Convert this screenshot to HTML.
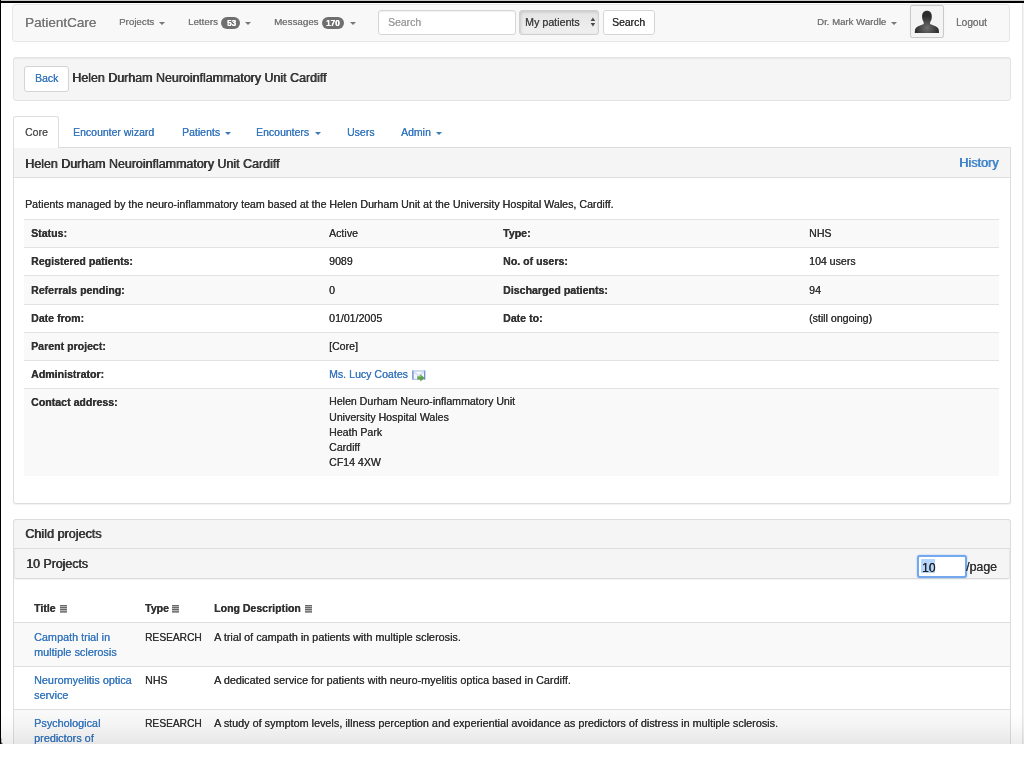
<!DOCTYPE html>
<html><head><meta charset="utf-8"><title>PatientCare</title>
<style>
html,body{margin:0;padding:0;background:#fff;width:1024px;height:768px;overflow:hidden;}
body{position:relative;font-family:"Liberation Sans",sans-serif;}
body>div,body>svg{position:absolute;}
.t{white-space:pre;line-height:normal;will-change:transform;}
</style></head><body>
<div style="left:0px;top:0px;width:1024.00px;height:1.00px;background:#c9c9c9"></div>
<div style="left:0px;top:1.0px;width:1024.00px;height:1.70px;background:#000"></div>
<div style="left:0px;top:0px;width:1.25px;height:744.00px;background:#000"></div>
<div style="left:1021.5px;top:2.7px;width:2.50px;height:741.30px;background:#f3f3f3;border-left:1px solid #e6e6e6;box-sizing:border-box"></div>
<div style="left:12.3px;top:4.3px;width:998.20px;height:37.70px;background:#f8f8f8;border:1px solid #e7e7e7;border-radius:3px;box-sizing:border-box"></div>
<div class="t" style="left:24.6px;top:14.68px;font-size:13.5px;color:#777;text-shadow:0.25px 0 0 #777;">PatientCare</div>
<div class="t" style="left:119.1px;top:16.13px;font-size:9.75px;color:#777;text-shadow:0.25px 0 0 #777;">Projects</div>
<div style="left:159.3px;top:21.6px;width:0;height:0;border-left:3.00px solid transparent;border-right:3.00px solid transparent;border-top:3.20px solid #777;"></div>
<div class="t" style="left:188.3px;top:16.13px;font-size:9.75px;color:#777;text-shadow:0.25px 0 0 #777;">Letters</div>
<div style="left:221.1px;top:16.9px;width:18.90px;height:11.90px;background:#6f6f6f;border-radius:6px"></div>
<div class="t" style="left:226.6px;top:19.06px;font-size:8.2px;color:#fff;font-weight:bold;text-shadow:0.3px 0 0 #fff;">53</div>
<div style="left:245.4px;top:21.5px;width:0;height:0;border-left:3.00px solid transparent;border-right:3.00px solid transparent;border-top:3.20px solid #777;"></div>
<div class="t" style="left:273.8px;top:16.13px;font-size:9.75px;color:#777;text-shadow:0.25px 0 0 #777;">Messages</div>
<div style="left:321.5px;top:17.0px;width:22.70px;height:11.80px;background:#6f6f6f;border-radius:6px"></div>
<div class="t" style="left:326.3px;top:19.06px;font-size:8.2px;color:#fff;font-weight:bold;text-shadow:0.3px 0 0 #fff;">170</div>
<div style="left:349.7px;top:21.5px;width:0;height:0;border-left:3.00px solid transparent;border-right:3.00px solid transparent;border-top:3.20px solid #777;"></div>
<div style="left:378.1px;top:9.5px;width:137.50px;height:25.30px;background:#fff;border:1px solid #d6d6d6;border-radius:3px;box-sizing:border-box;box-shadow:inset 0 1px 1px rgba(0,0,0,.06)"></div>
<div class="t" style="left:387.7px;top:17.09px;font-size:10.45px;color:#a0a0a0;text-shadow:0.25px 0 0 #a0a0a0;">Search</div>
<div style="left:518.6px;top:9.5px;width:80.80px;height:25.00px;background:linear-gradient(#e4e4e4,#f0f0f0);border:1px solid #d0d0d0;border-radius:3px;box-sizing:border-box;box-shadow:inset 1px 1px 3px rgba(0,0,0,.14)"></div>
<div class="t" style="left:525.3px;top:15.76px;font-size:10.7px;color:#444;text-shadow:0.25px 0 0 #444;">My patients</div>
<svg style="position:absolute;left:589.5px;top:17px" width="6" height="10" viewBox="0 0 6 10"><path d="M0.6 4.1 L2.9 0.6 L5.2 4.1 Z M0.6 5.9 L2.9 9.5 L5.2 5.9 Z" fill="#4a4a4a"/></svg>
<div style="left:602.5px;top:9.5px;width:52.00px;height:25.00px;background:#fff;border:1px solid #d6d6d6;border-radius:3px;box-sizing:border-box"></div>
<div class="t" style="left:612.3px;top:16.89px;font-size:10.45px;color:#333;text-shadow:0.25px 0 0 #333;">Search</div>
<div class="t" style="left:816.6px;top:16.33px;font-size:9.64px;color:#777;text-shadow:0.25px 0 0 #777;">Dr. Mark Wardle</div>
<div style="left:891.2px;top:21.5px;width:0;height:0;border-left:3.00px solid transparent;border-right:3.00px solid transparent;border-top:3.20px solid #777;"></div>
<div style="left:910.2px;top:4.5px;width:33.70px;height:33.40px;background:#f4f4f4;border:1px solid #c9c9c9;border-radius:2.5px;box-sizing:border-box;box-shadow:0 0 1px rgba(0,0,0,.1)"></div>
<svg style="position:absolute;left:912px;top:7px" width="30" height="29" viewBox="0 0 30 29">
<defs><radialGradient id="av" cx="15" cy="21" r="12" gradientUnits="userSpaceOnUse"><stop offset="0" stop-color="#6e6e6e"/><stop offset="1" stop-color="#2c2c2c"/></radialGradient></defs>
<path d="M15 3.7 C12 3.7 10.1 5.8 10.1 9.2 C10.1 11.5 10.6 13.5 11.6 14.8 L11.8 17.0 C9.5 18.2 6.5 19 4.6 20.2 C3.2 21.2 2.8 22.8 2.8 26 L27 26 C27 22.8 26.6 21.2 25.2 20.2 C23.3 19 20.3 18.2 18 17.0 L18.3 14.8 C19.3 13.5 19.8 11.5 19.8 9.2 C19.8 5.8 18 3.7 15 3.7 Z" fill="url(#av)"/>
</svg>
<div class="t" style="left:956.3px;top:16.74px;font-size:10.07px;color:#777;text-shadow:0.25px 0 0 #777;">Logout</div>
<div style="left:12.5px;top:57.3px;width:998.00px;height:43.70px;background:#f5f5f5;border:1px solid #e3e3e3;border-radius:3px;box-sizing:border-box;box-shadow:inset 0 1px 1px rgba(0,0,0,.05)"></div>
<div style="left:24.4px;top:65.8px;width:44.20px;height:25.80px;background:#fff;border:1px solid #d4d4d4;border-radius:3px;box-sizing:border-box"></div>
<div class="t" style="left:34.8px;top:72.96px;font-size:10.48px;color:#3878be;text-shadow:0.25px 0 0 #3878be;">Back</div>
<div class="t" style="left:72.2px;top:70.75px;font-size:12.45px;color:#333;text-shadow:0.7px 0 0 #333;">Helen Durham Neuroinflammatory Unit Cardiff</div>
<div style="left:12.5px;top:147.1px;width:998.50px;height:1.00px;background:#ddd"></div>
<div style="left:12.8px;top:116.2px;width:46.40px;height:31.90px;background:#fff;border:1px solid #ddd;border-bottom:none;border-radius:3px 3px 0 0;box-sizing:border-box"></div>
<div class="t" style="left:24.5px;top:125.94px;font-size:10.5px;color:#555;text-shadow:0.25px 0 0 #555;">Core</div>
<div class="t" style="left:73.3px;top:125.94px;font-size:10.5px;color:#3878be;text-shadow:0.25px 0 0 #3878be;">Encounter wizard</div>
<div class="t" style="left:181.8px;top:125.94px;font-size:10.5px;color:#3878be;text-shadow:0.25px 0 0 #3878be;">Patients</div>
<div style="left:225.0px;top:132.0px;width:0;height:0;border-left:3.00px solid transparent;border-right:3.00px solid transparent;border-top:3.20px solid #3878be;"></div>
<div class="t" style="left:256.4px;top:125.94px;font-size:10.5px;color:#3878be;text-shadow:0.25px 0 0 #3878be;">Encounters</div>
<div style="left:315.3px;top:132.0px;width:0;height:0;border-left:3.00px solid transparent;border-right:3.00px solid transparent;border-top:3.20px solid #3878be;"></div>
<div class="t" style="left:347.1px;top:125.94px;font-size:10.5px;color:#3878be;text-shadow:0.25px 0 0 #3878be;">Users</div>
<div class="t" style="left:400.5px;top:125.94px;font-size:10.5px;color:#3878be;text-shadow:0.25px 0 0 #3878be;">Admin</div>
<div style="left:435.6px;top:132.0px;width:0;height:0;border-left:3.00px solid transparent;border-right:3.00px solid transparent;border-top:3.20px solid #3878be;"></div>
<div style="left:12.5px;top:148.1px;width:998.00px;height:355.50px;background:#fff;border:1px solid #ddd;border-top:none;border-radius:0 0 3px 3px;box-sizing:border-box;box-shadow:0 1px 1px rgba(0,0,0,.05)"></div>
<div style="left:12.5px;top:148.1px;width:998.00px;height:29.70px;background:#f5f5f5;border:1px solid #ddd;border-top:none;box-sizing:border-box"></div>
<div class="t" style="left:24.7px;top:156.55px;font-size:12.45px;color:#333;text-shadow:0.7px 0 0 #333;">Helen Durham Neuroinflammatory Unit Cardiff</div>
<div class="t" style="left:959.1px;top:156.36px;font-size:12.65px;color:#4285c9;text-shadow:0.7px 0 0 #4285c9;">History</div>
<div class="t" style="left:24.7px;top:198.07px;font-size:10.68px;color:#333;text-shadow:0.25px 0 0 #333;">Patients managed by the neuro-inflammatory team based at the Helen Durham Unit at the University Hospital Wales, Cardiff.</div>
<div style="left:24.4px;top:219.0px;width:974.60px;height:28.20px;background:#f9f9f9;border-top:1px solid #e2e2e2;box-sizing:border-box"></div>
<div class="t" style="left:30.8px;top:227.15px;font-size:10.6px;color:#333;font-weight:bold;text-shadow:0.3px 0 0 #333;">Status:</div>
<div class="t" style="left:328.9px;top:227.15px;font-size:10.6px;color:#333;text-shadow:0.25px 0 0 #333;">Active</div>
<div class="t" style="left:503.1px;top:227.15px;font-size:10.6px;color:#333;font-weight:bold;text-shadow:0.3px 0 0 #333;">Type:</div>
<div class="t" style="left:808.8px;top:227.15px;font-size:10.6px;color:#333;text-shadow:0.25px 0 0 #333;">NHS</div>
<div style="left:24.4px;top:247.2px;width:974.60px;height:28.20px;background:#fff;border-top:1px solid #e2e2e2;box-sizing:border-box"></div>
<div class="t" style="left:30.8px;top:255.35px;font-size:10.6px;color:#333;font-weight:bold;text-shadow:0.3px 0 0 #333;">Registered patients:</div>
<div class="t" style="left:328.9px;top:255.35px;font-size:10.6px;color:#333;text-shadow:0.25px 0 0 #333;">9089</div>
<div class="t" style="left:503.1px;top:255.35px;font-size:10.6px;color:#333;font-weight:bold;text-shadow:0.3px 0 0 #333;">No. of users:</div>
<div class="t" style="left:808.8px;top:255.35px;font-size:10.6px;color:#333;text-shadow:0.25px 0 0 #333;">104 users</div>
<div style="left:24.4px;top:275.4px;width:974.60px;height:28.20px;background:#f9f9f9;border-top:1px solid #e2e2e2;box-sizing:border-box"></div>
<div class="t" style="left:30.8px;top:283.55px;font-size:10.6px;color:#333;font-weight:bold;text-shadow:0.3px 0 0 #333;">Referrals pending:</div>
<div class="t" style="left:328.9px;top:283.55px;font-size:10.6px;color:#333;text-shadow:0.25px 0 0 #333;">0</div>
<div class="t" style="left:503.1px;top:283.55px;font-size:10.6px;color:#333;font-weight:bold;text-shadow:0.3px 0 0 #333;">Discharged patients:</div>
<div class="t" style="left:808.8px;top:283.55px;font-size:10.6px;color:#333;text-shadow:0.25px 0 0 #333;">94</div>
<div style="left:24.4px;top:303.6px;width:974.60px;height:28.20px;background:#fff;border-top:1px solid #e2e2e2;box-sizing:border-box"></div>
<div class="t" style="left:30.8px;top:311.75px;font-size:10.6px;color:#333;font-weight:bold;text-shadow:0.3px 0 0 #333;">Date from:</div>
<div class="t" style="left:328.9px;top:311.75px;font-size:10.6px;color:#333;text-shadow:0.25px 0 0 #333;">01/01/2005</div>
<div class="t" style="left:503.1px;top:311.75px;font-size:10.6px;color:#333;font-weight:bold;text-shadow:0.3px 0 0 #333;">Date to:</div>
<div class="t" style="left:808.8px;top:311.75px;font-size:10.6px;color:#333;text-shadow:0.25px 0 0 #333;">(still ongoing)</div>
<div style="left:24.4px;top:331.8px;width:974.60px;height:28.20px;background:#f9f9f9;border-top:1px solid #e2e2e2;box-sizing:border-box"></div>
<div class="t" style="left:30.8px;top:339.95px;font-size:10.6px;color:#333;font-weight:bold;text-shadow:0.3px 0 0 #333;">Parent project:</div>
<div class="t" style="left:328.9px;top:339.95px;font-size:10.6px;color:#333;text-shadow:0.25px 0 0 #333;">[Core]</div>
<div style="left:24.4px;top:360.0px;width:974.60px;height:28.00px;background:#fff;border-top:1px solid #e2e2e2;box-sizing:border-box"></div>
<div class="t" style="left:30.8px;top:368.15px;font-size:10.6px;color:#333;font-weight:bold;text-shadow:0.3px 0 0 #333;">Administrator:</div>
<div class="t" style="left:328.9px;top:368.15px;font-size:10.6px;color:#3878be;text-shadow:0.25px 0 0 #3878be;">Ms. Lucy Coates</div>
<div style="left:24.4px;top:388.0px;width:974.60px;height:87.70px;background:#f9f9f9;border-top:1px solid #e2e2e2;box-sizing:border-box"></div>
<div class="t" style="left:30.8px;top:396.15px;font-size:10.6px;color:#333;font-weight:bold;text-shadow:0.3px 0 0 #333;">Contact address:</div>
<div class="t" style="left:328.9px;top:395.25px;font-size:10.6px;color:#333;text-shadow:0.25px 0 0 #333;">Helen Durham Neuro-inflammatory Unit</div>
<div class="t" style="left:328.9px;top:410.50px;font-size:10.6px;color:#333;text-shadow:0.25px 0 0 #333;">University Hospital Wales</div>
<div class="t" style="left:328.9px;top:425.75px;font-size:10.6px;color:#333;text-shadow:0.25px 0 0 #333;">Heath Park</div>
<div class="t" style="left:328.9px;top:441.00px;font-size:10.6px;color:#333;text-shadow:0.25px 0 0 #333;">Cardiff</div>
<div class="t" style="left:328.9px;top:456.25px;font-size:10.6px;color:#333;text-shadow:0.25px 0 0 #333;">CF14 4XW</div>
<svg style="position:absolute;left:411.5px;top:369.5px" width="14" height="13" viewBox="0 0 14 13">
<rect x="0.9" y="0.9" width="11.8" height="8.4" fill="#f2f5fd" stroke="#a9bde8" stroke-width="1"/>
<path d="M0.9 0.6 V9.6 M12.7 0.6 V9.6" stroke="#6686cf" stroke-width="1.1"/>
<path d="M1.2 1.4 L6.8 5.8 L12.4 1.4" fill="none" stroke="#b8c9ee" stroke-width="0.9"/>
<path d="M5.3 6.2 L8.3 6.2 L8.3 4.2 L12.6 7.9 L8.3 11.6 L8.3 9.6 L5.3 9.6 Z" fill="#5e9f43"/>
<path d="M5.8 6.8 L8.9 6.8 L8.9 5.6" fill="none" stroke="#9cc98a" stroke-width="0.7"/>
</svg>
<div style="left:12.5px;top:519.0px;width:998.00px;height:225.00px;background:#fff;border:1px solid #ddd;border-radius:3px 3px 0 0;box-sizing:border-box"></div>
<div style="left:12.5px;top:519.0px;width:998.00px;height:29.60px;background:#f5f5f5;border:1px solid #ddd;border-radius:3px 3px 0 0;box-sizing:border-box"></div>
<div class="t" style="left:24.8px;top:526.71px;font-size:12.6px;color:#333;text-shadow:0.7px 0 0 #333;">Child projects</div>
<div style="left:13.5px;top:548.6px;width:996.00px;height:30.40px;background:#f5f5f5;border:1px solid #e6e6e6;border-top:none;border-bottom-color:#dadada;border-radius:0 0 3px 3px;box-sizing:border-box;box-shadow:0 1px 1px rgba(0,0,0,.05)"></div>
<div class="t" style="left:25.5px;top:557.34px;font-size:12.35px;color:#333;text-shadow:0.7px 0 0 #333;">10 Projects</div>
<div style="left:917.4px;top:555.0px;width:49.60px;height:23.00px;background:#fff;border:2px solid #74a8ee;border-radius:3px;box-sizing:border-box;box-shadow:0 0 1.5px rgba(80,140,230,.7)"></div>
<div style="left:921.2px;top:558.8px;width:13.90px;height:14.50px;background:#b4d5fe"></div>
<div class="t" style="left:921.5px;top:560.66px;font-size:12.0px;color:#222;text-shadow:0.25px 0 0 #222;">10</div>
<div class="t" style="left:965.6px;top:560.09px;font-size:12.4px;color:#333;text-shadow:0.25px 0 0 #333;">/page</div>
<div style="left:12.5px;top:621.8px;width:998.00px;height:1.50px;background:#ddd"></div>
<div class="t" style="left:34.2px;top:602.09px;font-size:10.55px;color:#333;font-weight:bold;text-shadow:0.3px 0 0 #333;">Title</div>
<div class="t" style="left:145.0px;top:602.09px;font-size:10.55px;color:#333;font-weight:bold;text-shadow:0.3px 0 0 #333;">Type</div>
<div class="t" style="left:213.8px;top:602.09px;font-size:10.55px;color:#333;font-weight:bold;text-shadow:0.3px 0 0 #333;">Long Description</div>
<svg style="position:absolute;left:60.0px;top:605.0px" width="7" height="8" viewBox="0 0 7 8"><rect x="0" y="0" width="7" height="8" fill="#bcbcbc"/><path d="M0 0.6H7M0 2.6H7M0 4.6H7M0 6.8H7" stroke="#5e5e5e" stroke-width="1.0"/></svg>
<svg style="position:absolute;left:171.6px;top:605.0px" width="7" height="8" viewBox="0 0 7 8"><rect x="0" y="0" width="7" height="8" fill="#bcbcbc"/><path d="M0 0.6H7M0 2.6H7M0 4.6H7M0 6.8H7" stroke="#5e5e5e" stroke-width="1.0"/></svg>
<svg style="position:absolute;left:304.8px;top:605.0px" width="7" height="8" viewBox="0 0 7 8"><rect x="0" y="0" width="7" height="8" fill="#bcbcbc"/><path d="M0 0.6H7M0 2.6H7M0 4.6H7M0 6.8H7" stroke="#5e5e5e" stroke-width="1.0"/></svg>
<div style="left:13.5px;top:623.3px;width:996.00px;height:42.90px;background:#f9f9f9"></div>
<div class="t" style="left:34.2px;top:630.62px;font-size:10.85px;color:#3878be;text-shadow:0.25px 0 0 #3878be;">Campath trial in</div>
<div class="t" style="left:34.2px;top:645.72px;font-size:10.85px;color:#3878be;text-shadow:0.25px 0 0 #3878be;">multiple sclerosis</div>
<div class="t" style="left:145.0px;top:631.82px;font-size:10.2px;color:#333;text-shadow:0.25px 0 0 #333;">RESEARCH</div>
<div class="t" style="left:213.8px;top:630.64px;font-size:10.83px;color:#333;text-shadow:0.25px 0 0 #333;">A trial of campath in patients with multiple sclerosis.</div>
<div style="left:13.5px;top:666.2px;width:996.00px;height:43.10px;background:#fff;border-top:1px solid #dedede;box-sizing:border-box"></div>
<div class="t" style="left:34.2px;top:673.52px;font-size:10.85px;color:#3878be;text-shadow:0.25px 0 0 #3878be;">Neuromyelitis optica</div>
<div class="t" style="left:34.2px;top:688.62px;font-size:10.85px;color:#3878be;text-shadow:0.25px 0 0 #3878be;">service</div>
<div class="t" style="left:145.0px;top:673.75px;font-size:10.6px;color:#333;text-shadow:0.25px 0 0 #333;">NHS</div>
<div class="t" style="left:213.8px;top:673.54px;font-size:10.83px;color:#333;text-shadow:0.25px 0 0 #333;">A dedicated service for patients with neuro-myelitis optica based in Cardiff.</div>
<div style="left:13.5px;top:709.3px;width:996.00px;height:34.70px;background:#f9f9f9;border-top:1px solid #dedede;box-sizing:border-box"></div>
<div class="t" style="left:34.2px;top:716.62px;font-size:10.85px;color:#3878be;text-shadow:0.25px 0 0 #3878be;">Psychological</div>
<div class="t" style="left:34.2px;top:731.72px;font-size:10.85px;color:#3878be;text-shadow:0.25px 0 0 #3878be;">predictors of</div>
<div class="t" style="left:145.0px;top:717.82px;font-size:10.2px;color:#333;text-shadow:0.25px 0 0 #333;">RESEARCH</div>
<div class="t" style="left:213.8px;top:716.64px;font-size:10.83px;color:#333;text-shadow:0.25px 0 0 #333;">A study of symptom levels, illness perception and experiential avoidance as predictors of distress in multiple sclerosis.</div>
<div style="left:1.25px;top:712px;width:1022.75px;height:32.00px;background:linear-gradient(rgba(0,0,0,0),rgba(0,0,0,0.02) 40%,rgba(0,0,0,0.07));z-index:5"></div>
<svg style="position:absolute;left:0;top:738px;z-index:6" width="4" height="7" viewBox="0 0 4 7"><path d="M0 0 L1.25 0 L1.25 4.2 L3 5.8 L0 5.8 Z" fill="#000" opacity=".85"/></svg>
</body></html>
